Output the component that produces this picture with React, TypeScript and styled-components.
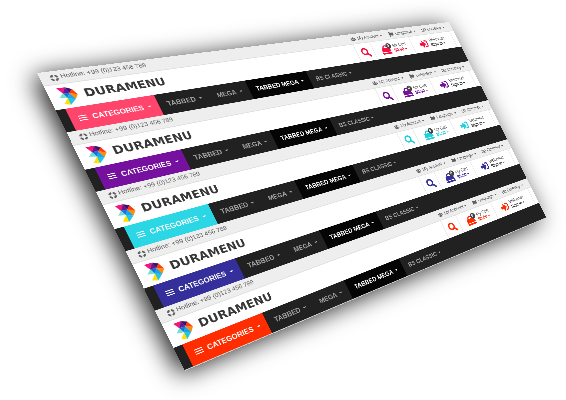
import React from 'react';
import styled, { createGlobalStyle } from 'styled-components';
import { FaFlag, FaRegMoneyBillAlt, FaSignInAlt, FaUsers } from 'react-icons/fa';

const GlobalStyle = createGlobalStyle`
  * { box-sizing: border-box; }
  body { margin: 0; background: #fff; font-family: "Liberation Sans", Arial, sans-serif; }
  button { border: 0; background: none; font: inherit; color: inherit; padding: 0; cursor: pointer; }
  a { color: inherit; text-decoration: none; }
`;

const Scene = styled.main`
  min-height: 100vh;
  overflow: hidden;
  filter: drop-shadow(-6px 4px 12px rgba(0, 0, 0, 0.85));
`;

/* The flat 570px board, seen in perspective with its right side further away. */
const Board = styled.div`
  width: 570px;
  height: 0;
  text-rendering: geometricPrecision;
  transform-origin: 0 0;
  transform: matrix3d(1.13246, -0.069474, 0, 0.00091228, 0.4214, 0.8486, 0, 0, 0, 0, 1, 0, 37, 73, 0, 1);
`;

const Section = styled.section<{ $accent: string; $icon: string }>`
  --accent: ${(p) => p.$accent};
  --icon: ${(p) => p.$icon};
  background: #fff;
  &:last-child { border-bottom: 1px solid #ccc; }
`;

const TopBar = styled.div`
  display: flex;
  align-items: center;
  justify-content: space-between;
  height: 16px;
  padding: 0 14px 0 9px;
  background: #eee;
  border-bottom: 1px solid #e0e0e0;
  color: #606060;
  font-size: 7px;
`;

const Hotline = styled.div`
  display: flex;
  align-items: center;
  gap: 2px;
`;

const TopLinks = styled.div`
  display: flex;
  gap: 12px;
`;

const TopLink = styled.button`
  display: flex;
  align-items: center;
  gap: 3px;
`;

const Caret = styled.span`
  border: 2px solid transparent;
  border-top-color: currentColor;
  border-bottom: 0;
`;

const Header = styled.header`
  display: flex;
  justify-content: space-between;
  height: 28px;
  padding: 0 8px 0 9px;
`;

const Logo = styled.a`
  display: flex;
  align-items: center;
  gap: 6px;
  color: #383838;
  font: 700 13px "DejaVu Sans", sans-serif;
`;

const Tools = styled.div`
  display: flex;
  border-right: 1px solid #e4e4e4;
`;

const Tool = styled.button`
  display: flex;
  align-items: center;
  gap: 5px;
  padding: 0 6px;
  border-left: 1px solid #e4e4e4;
  color: var(--icon);
`;

const WideTool = styled(Tool)`
  padding: 0 10px 0 13px;
  &:last-child { padding: 0 16px 0 14px; }
`;

const BagIcon = styled.span`
  position: relative;
  display: flex;
`;

const Badge = styled.span`
  position: absolute;
  top: -2px;
  right: -2px;
  width: 9px;
  height: 9px;
  border-radius: 50%;
  background: #444;
  color: #fff;
  font-size: 6px;
  font-weight: 700;
  line-height: 9px;
  text-align: center;
`;

const Lines = styled.span`
  display: flex;
  flex-direction: column;
  align-items: flex-start;
  color: #555;
  font-size: 7px;
  line-height: 8px;
`;

const Strong = styled.strong<{ $accented?: boolean }>`
  display: flex;
  align-items: center;
  gap: 2px;
  color: ${(p) => (p.$accented ? 'var(--icon)' : '#333')};
`;

const Nav = styled.nav`
  display: flex;
  height: 26px;
  padding-left: 9px;
  background: #212121;
`;

const NavItem = styled.button<{ $active?: boolean }>`
  display: flex;
  align-items: center;
  gap: 4px;
  padding: 0 9px;
  background: ${(p) => (p.$active ? '#050505' : 'transparent')};
  color: ${(p) => (p.$active ? '#fff' : '#a2a2a2')};
  font-size: 8px;
  font-weight: 700;
`;

const Categories = styled(NavItem)`
  gap: 5px;
  padding: 0 8px;
  background: var(--accent);
  color: #fff;
`;

const LogoMark = () => (
  <svg width="18" height="21" viewBox="0 0 36 42" aria-hidden="true">
    <path fill="#f5147d" d="M2 0 18 0 9 13Z" />
    <path fill="#6b1787" d="M18 0 21 14 9 13Z" />
    <path fill="#3f1069" d="M18 0 29 6 21 14Z" />
    <path fill="#ff3d0c" d="M29 6 35 20 21 14Z" />
    <path fill="#ff8b0d" d="M21 14 35 20 27 30Z" />
    <path fill="#1672d8" d="M9 13 21 14 14 25Z" />
    <path fill="#17a2f2" d="M21 14 27 30 14 25Z" />
    <path fill="#70e0d0" d="M9 13 14 25 0 22Z" />
    <path fill="#20c5e8" d="M14 25 27 30 14 41Z" />
    <path fill="#ffe000" d="M14 25 14 41 3 37Z" />
  </svg>
);

const LifeRing = () => (
  <svg width="8" height="8" viewBox="0 0 16 16" fill="none" stroke="currentColor" aria-hidden="true">
    <circle cx="8" cy="8" r="5.8" strokeWidth="3.8" strokeDasharray="6.11 3" strokeDashoffset="-1.5" />
  </svg>
);

const SearchIcon = () => (
  <svg width="15" height="15" viewBox="0 0 30 30" fill="none" stroke="currentColor" aria-hidden="true">
    <circle cx="13" cy="12" r="9" strokeWidth="4.5" />
    <path d="M19.5 18.5 27.5 27" strokeWidth="5.5" strokeLinecap="round" />
  </svg>
);

const BasketIcon = () => (
  <svg width="17" height="15" viewBox="0 0 34 30" fill="none" aria-hidden="true">
    <path d="M8 12C8 0 23 0 23 12" stroke="currentColor" strokeWidth="3.5" />
    <path d="M3 10H29L32 23H0Z M0 25H32V30H0Z" fill="currentColor" />
  </svg>
);

const BarsIcon = () => (
  <svg width="8" height="8" viewBox="0 0 16 16" stroke="currentColor" strokeWidth="2" aria-hidden="true">
    <path d="M0 3H16M0 8H16M0 13H16" />
  </svg>
);

const themes = [
  { accent: '#ff456b', icon: '#f5123f' },
  { accent: '#75119e', icon: '#75119e' },
  { accent: '#2bd7e4', icon: '#1fd0de' },
  { accent: '#352f9c', icon: '#352f9c' },
  { accent: '#ff2d00', icon: '#ff2d00' },
];

const topLinks = [
  { label: 'My Account', Icon: FaUsers },
  { label: 'Language', Icon: FaFlag },
  { label: 'Currency', Icon: FaRegMoneyBillAlt },
];

const navItems = ['TABBED', 'MEGA', 'TABBED MEGA', 'BS CLASSIC'];

const MenuPreview = ({ accent, icon }: { accent: string; icon: string }) => (
  <Section $accent={accent} $icon={icon}>
    <TopBar>
      <Hotline><LifeRing />Hotline: +99 (0)123 456 789</Hotline>
      <TopLinks>
        {topLinks.map(({ label, Icon }) => (
          <TopLink key={label}><Icon size={8} />{label}<Caret /></TopLink>
        ))}
      </TopLinks>
    </TopBar>
    <Header>
      <Logo href="#"><LogoMark />DURAMENU</Logo>
      <Tools>
        <Tool aria-label="Search"><SearchIcon /></Tool>
        <WideTool>
          <BagIcon><BasketIcon /><Badge>0</Badge></BagIcon>
          <Lines>My Cart<Strong $accented>$0.00<Caret /></Strong></Lines>
        </WideTool>
        <WideTool>
          <FaSignInAlt size={15} />
          <Lines>Welcome!<Strong>Sign in<Caret /></Strong></Lines>
        </WideTool>
      </Tools>
    </Header>
    <Nav>
      <Categories><BarsIcon />CATEGORIES<Caret /></Categories>
      {navItems.map((item) => (
        <NavItem key={item} $active={item === 'TABBED MEGA'}>{item}<Caret /></NavItem>
      ))}
    </Nav>
  </Section>
);

export default function App() {
  return (
    <>
      <GlobalStyle />
      <Scene>
        <Board>
          {themes.map((theme) => <MenuPreview key={theme.accent} {...theme} />)}
        </Board>
      </Scene>
    </>
  );
}
